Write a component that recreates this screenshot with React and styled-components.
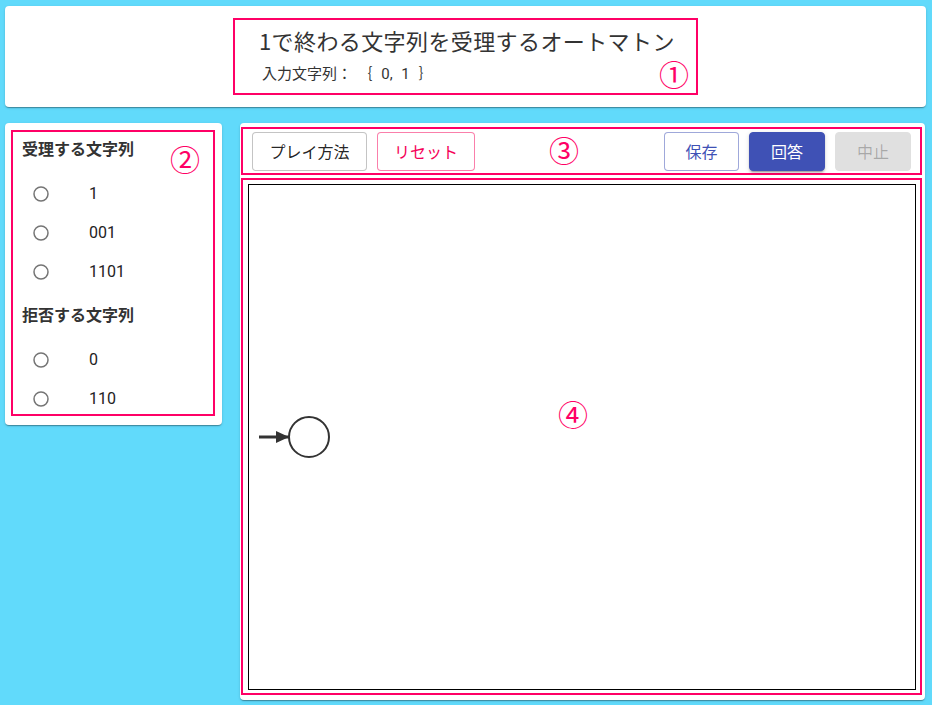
import React from "react";
import styled, { createGlobalStyle } from "styled-components";

const GlobalStyle = createGlobalStyle`
  body {
    margin: 0;
    background: #61dafb;
    font-family: "Noto Sans CJK JP", "Noto Sans", sans-serif;
    color: rgba(0, 0, 0, 0.87);
  }
`;

const Page = styled.div`
  padding: 6px 6px 0 5px;
  height: 705px;
  box-sizing: border-box;
`;

const Card = styled.div`
  background: #fff;
  border-radius: 4px;
  box-shadow: 0px 2px 1px -1px rgba(0, 0, 0, 0.2),
    0px 1px 1px 0px rgba(0, 0, 0, 0.14), 0px 1px 3px 0px rgba(0, 0, 0, 0.12);
  box-sizing: border-box;
`;

const Header = styled(Card)`
  height: 101px;
  padding-top: 12px;
  display: flex;
  justify-content: center;
  align-items: flex-start;
`;

const Marked = styled.div`
  position: relative;
  border: 2px solid #ff0066;
  box-sizing: border-box;
`;

const TitleBox = styled(Marked)`
  width: 465px;
  height: 77px;
  padding: 5px 0 0 24px;
  white-space: nowrap;
`;

const Title = styled.div`
  font-size: 22px;
  line-height: 30px;
  letter-spacing: 0.4px;
  margin-bottom: 6px;
  color: #333;
`;

const Subtitle = styled.div`
  font-size: 15px;
  line-height: 24px;
  padding-left: 3px;
  color: #333;
`;

const Braces = styled.span`
  font-family: "Roboto", "Noto Sans CJK JP", sans-serif;
  word-spacing: 5px;
  margin-left: 13px;
`;

const Number = styled.span`
  position: absolute;
  font-size: 30px;
  line-height: 1;
  color: #ff0066;
  font-family: "Noto Sans CJK JP", sans-serif;
`;

const Body = styled.div`
  display: flex;
  align-items: flex-start;
  margin-top: 16px;
  gap: 18px;
`;

const Side = styled(Card)`
  width: 217px;
  padding: 7px 7px 9px 6px;
`;

const ListBox = styled(Marked)`
  height: 286px;
  padding: 4px 9px 0 9px;
  overflow: hidden;
`;

const ListHeading = styled.div`
  font-size: 16px;
  font-weight: bold;
  line-height: 24px;
  margin-top: ${(p) => p.$top}px;
  margin-bottom: ${(p) => p.$bottom}px;
  color: #333;
`;

const Row = styled.label`
  display: flex;
  align-items: center;
  height: 39px;
  padding-left: 11px;
  font-family: "Roboto", "Noto Sans", sans-serif;
  font-size: 16px;
  color: #222;
`;

const RadioIcon = styled.svg`
  width: 16px;
  height: 16px;
  flex: none;
  margin-right: 40px;
`;

const Main = styled(Card)`
  width: 685px;
  height: 577px;
  padding: 4px 3px 5px 1px;
  display: flex;
  flex-direction: column;
  gap: 3px;
`;

const Toolbar = styled(Marked)`
  height: 48px;
  display: flex;
  align-items: center;
  gap: 10px;
  padding: 0 9px;
`;

const Spacer = styled.div`
  flex: 1;
`;

const Button = styled.button`
  width: ${(p) => p.$w}px;
  height: 39px;
  border-radius: 4px;
  font-family: "Noto Sans CJK JP", sans-serif;
  font-size: 16px;
  padding: 0;
  cursor: pointer;
  box-sizing: border-box;
  background: ${(p) =>
    p.$variant === "contained" ? "#3f51b5" : p.$variant === "disabled" ? "#e0e0e0" : "#fff"};
  color: ${(p) =>
    ({
      default: "rgba(0,0,0,0.87)",
      secondary: "#f50057",
      primary: "#3f51b5",
      contained: "#fff",
      disabled: "rgba(0,0,0,0.26)",
    })[p.$variant]};
  border: 1px solid
    ${(p) =>
      ({
        default: "rgba(0,0,0,0.23)",
        secondary: "rgba(245,0,87,0.5)",
        primary: "rgba(63,81,181,0.5)",
        contained: "#3f51b5",
        disabled: "#e0e0e0",
      })[p.$variant]};
  box-shadow: ${(p) =>
    p.$variant === "contained"
      ? "0px 3px 1px -2px rgba(0,0,0,0.2), 0px 2px 2px 0px rgba(0,0,0,0.14), 0px 1px 5px 0px rgba(0,0,0,0.12)"
      : "none"};
`;

const CanvasBox = styled(Marked)`
  height: 517px;
  padding: 4px 4px 3px 5px;
`;

const Canvas = styled.svg`
  display: block;
  width: 100%;
  height: 100%;
  border: 1px solid #000;
  box-sizing: border-box;
`;

const accepted = ["1", "001", "1101"];
const rejected = ["0", "110"];

function Radio() {
  return (
    <RadioIcon viewBox="0 0 16 16">
      <circle cx="8" cy="8" r="7" fill="none" stroke="#757575" strokeWidth="1.5" />
    </RadioIcon>
  );
}

export default function App() {
  return (
    <Page>
      <GlobalStyle />
      <Header>
        <TitleBox>
          <Title>1で終わる文字列を受理するオートマトン</Title>
          <Subtitle>
            入力文字列：<Braces>｛ 0, 1 ｝</Braces>
          </Subtitle>
          <Number style={{ right: 7, bottom: 5 }}>①</Number>
        </TitleBox>
      </Header>
      <Body>
        <Side>
          <ListBox>
            <ListHeading $top={0} $bottom={14}>
              受理する文字列
            </ListHeading>
            {accepted.map((s) => (
              <Row key={s}>
                <Radio />
                {s}
              </Row>
            ))}
            <ListHeading $top={11} $bottom={14}>
              拒否する文字列
            </ListHeading>
            {rejected.map((s) => (
              <Row key={s}>
                <Radio />
                {s}
              </Row>
            ))}
            <Number style={{ left: 157, top: 11 }}>②</Number>
          </ListBox>
        </Side>
        <Main>
          <Toolbar>
            <Button $w={115} $variant="default">プレイ方法</Button>
            <Button $w={98} $variant="secondary">リセット</Button>
            <Spacer />
            <Button $w={75} $variant="primary">保存</Button>
            <Button $w={76} $variant="contained">回答</Button>
            <Button $w={76} $variant="disabled">中止</Button>
            <Number style={{ left: 306, top: 5 }}>③</Number>
          </Toolbar>
          <CanvasBox>
            <Canvas>
              <defs>
                <marker
                  id="arrow"
                  markerWidth="13"
                  markerHeight="12"
                  refX="13"
                  refY="6"
                  orient="auto"
                  markerUnits="userSpaceOnUse"
                >
                  <path d="M0,0 L13,6 L0,12 z" fill="#333" />
                </marker>
              </defs>
              <line x1="10" y1="252" x2="40" y2="252" stroke="#333" strokeWidth="3" markerEnd="url(#arrow)" />
              <circle cx="60" cy="252" r="20" fill="#fff" stroke="#333" strokeWidth="2" />
            </Canvas>
            <Number style={{ left: 315, top: 218 }}>④</Number>
          </CanvasBox>
        </Main>
      </Body>
    </Page>
  );
}
